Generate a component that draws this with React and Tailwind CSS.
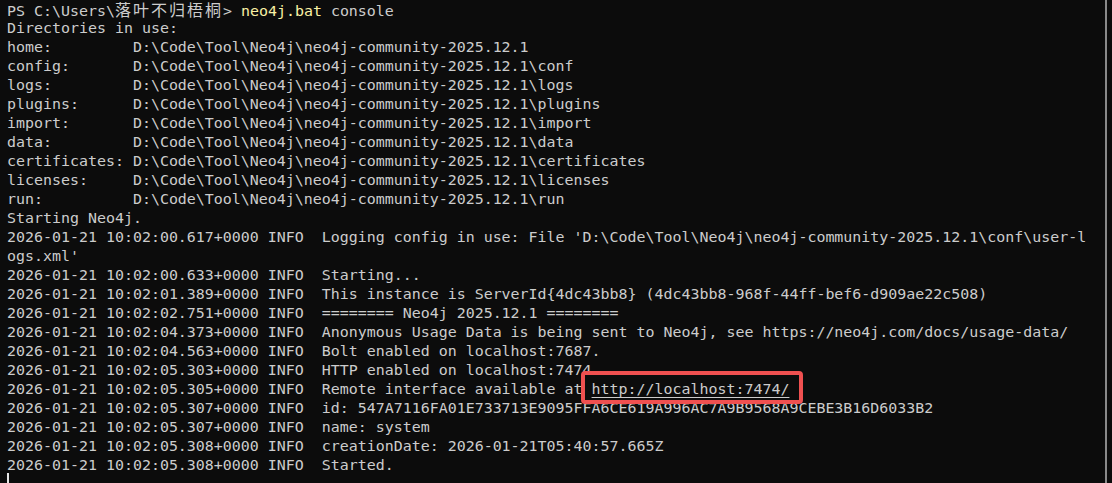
import React from "react";

const P = "D:\\Code\\Tool\\Neo4j\\neo4j-community-2025.12.1";

const dirs = [
  ["home:         ", ""],
  ["config:       ", "\\conf"],
  ["logs:         ", "\\logs"],
  ["plugins:      ", "\\plugins"],
  ["import:       ", "\\import"],
  ["data:         ", "\\data"],
  ["certificates: ", "\\certificates"],
  ["licenses:     ", "\\licenses"],
  ["run:          ", "\\run"],
];

const logs = [
  "2026-01-21 10:02:00.633+0000 INFO  Starting...",
  "2026-01-21 10:02:01.389+0000 INFO  This instance is ServerId{4dc43bb8} (4dc43bb8-968f-44ff-bef6-d909ae22c508)",
  "2026-01-21 10:02:02.751+0000 INFO  ======== Neo4j 2025.12.1 ========",
  "2026-01-21 10:02:04.373+0000 INFO  Anonymous Usage Data is being sent to Neo4j, see https://neo4j.com/docs/usage-data/",
  "2026-01-21 10:02:04.563+0000 INFO  Bolt enabled on localhost:7687.",
  "2026-01-21 10:02:05.303+0000 INFO  HTTP enabled on localhost:7474.",
];

const tail = [
  "2026-01-21 10:02:05.307+0000 INFO  id: 547A7116FA01E733713E9095FFA6CE619A996AC7A9B9568A9CEBE3B16D6033B2",
  "2026-01-21 10:02:05.307+0000 INFO  name: system",
  "2026-01-21 10:02:05.308+0000 INFO  creationDate: 2026-01-21T05:40:57.665Z",
  "2026-01-21 10:02:05.308+0000 INFO  Started.",
];

function Line({ children }) {
  return <div className="h-[19px] leading-[19px] whitespace-pre">{children}</div>;
}

export default function App() {
  return (
    <div className="relative flex h-[483px] w-full overflow-hidden bg-[#0c0c0c] text-[#cccccc]">
      <div className="flex-1 pl-[7px] text-[14.95px] [font-family:'DejaVu_Sans_Mono',monospace]">
        <Line>
          {"PS C:\\Users\\"}
          <span className="text-[16px] tracking-[2px] [font-family:'Noto_Sans_CJK_SC',sans-serif]">落叶不归梧桐</span>
          {"> "}
          <span className="text-[#f9f1a5]">neo4j.bat</span>
          {" console"}
        </Line>
        <Line>Directories in use:</Line>
        {dirs.map(([k, s]) => (
          <Line key={k}>{k + P + s}</Line>
        ))}
        <Line>Starting Neo4j.</Line>
        <Line>
          {"2026-01-21 10:02:00.617+0000 INFO  Logging config in use: File '" + P + "\\conf\\user-l"}
        </Line>
        <Line>ogs.xml'</Line>
        {logs.map((l) => (
          <Line key={l}>{l}</Line>
        ))}
        <Line>
          {"2026-01-21 10:02:05.305+0000 INFO  Remote interface available at "}
          <span className="underline underline-offset-[3px] decoration-1">http://localhost:7474/</span>
        </Line>
        {tail.map((l) => (
          <Line key={l}>{l}</Line>
        ))}
        <div className="mt-[-2px] h-[12px] w-[2px] bg-[#e6e6e6]" />
      </div>
      <div className="w-[2px] bg-[#8a8a8a]" />
      <div className="w-[5px]" />
      <div className="pointer-events-none absolute left-[581px] top-[371px] h-[33px] w-[222px] rounded-[4px] border-[4px] border-[#ef5050]" />
    </div>
  );
}
